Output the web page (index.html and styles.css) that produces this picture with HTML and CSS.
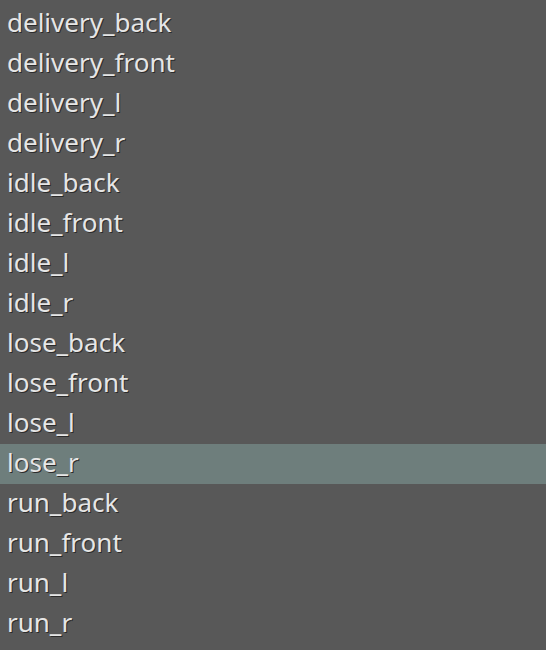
FILE: index.html
```html
<!DOCTYPE html>
<html>
<head>
<meta charset="utf-8">
<link rel="stylesheet" href="styles.css">
</head>
<body>
<ul class="list">
<li class="item">delivery_back</li>
<li class="item">delivery_front</li>
<li class="item">delivery_l</li>
<li class="item">delivery_r</li>
<li class="item">idle_back</li>
<li class="item">idle_front</li>
<li class="item">idle_l</li>
<li class="item">idle_r</li>
<li class="item">lose_back</li>
<li class="item">lose_front</li>
<li class="item">lose_l</li>
<li class="item selected">lose_r</li>
<li class="item">run_back</li>
<li class="item">run_front</li>
<li class="item">run_l</li>
<li class="item">run_r</li>
</ul>
</body>
</html>
```
FILE: styles.css
```css
html, body {
  margin: 0;
  padding: 0;
  background: #585858;
  width: 546px;
  height: 650px;
  overflow: hidden;
}
.list {
  list-style: none;
  margin: 0;
  padding: 4px 0 0 0;
  display: flex;
  flex-direction: column;
}
.item {
  height: 40px;
  line-height: 36px;
  padding-left: 7px;
  font-family: "Noto Sans", sans-serif;
  font-size: 26px;
  color: #e6e6e6;
  text-shadow: 1px 1px 0 #2b2b2b;
  white-space: nowrap;
}
.selected {
  background: #6e7e7c;
}
```
